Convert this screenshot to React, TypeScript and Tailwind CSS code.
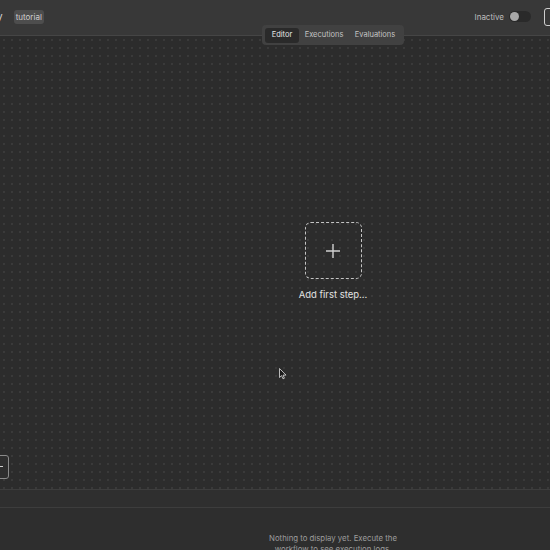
import React from "react";

function Tabs() {
  return (
    <div className="absolute left-[262px] top-[25px] z-10 flex h-[20px] items-center rounded-[4px] bg-[#414141] px-[3px] text-[7.5px] text-[#c4c4c4]">
      <div className="flex h-[15px] w-[34px] items-center justify-center rounded-[3px] bg-[#2a2a2a] text-[#e6e6e6]">Editor</div>
      <div className="flex w-[50px] justify-center">Executions</div>
      <div className="flex w-[52px] justify-center">Evaluations</div>
    </div>
  );
}

export default function App() {
  return (
    <div className="relative flex h-[550px] w-[550px] flex-col overflow-hidden bg-[#2d2d2d] font-['Inter',sans-serif]">
      {/* Header */}
      <header className="flex h-[36px] shrink-0 items-center justify-between border-b border-[#454545] bg-[#383838] pb-[2px]">
        <div className="flex items-center gap-[11px]">
          <span className="-ml-[3px] text-[10px] text-[#d6d6d6]">y</span>
          <span className="rounded-[3px] bg-[#4d4d4d] px-[2px] py-[1px] text-[8px] text-[#cfcfcf]">tutorial</span>
        </div>
        <div className="flex items-center">
          <span className="text-[8px] text-[#bdbdbd]">Inactive</span>
          <div className="ml-[5px] flex h-[11px] w-[22px] items-center rounded-full bg-[#2a2a2a] px-[1px]">
            <div className="h-[9px] w-[9px] rounded-full bg-[#a8a8a8]" />
          </div>
          <div className="ml-[13px] -mr-[30px] flex h-[18px] w-[36px] items-center rounded-[3px] border border-[#cfcfcf] pl-[6px] text-[8px] text-[#e8e8e8]">
            Save
          </div>
        </div>
      </header>

      <Tabs />

      {/* Canvas */}
      <main className="relative flex flex-1 items-center justify-center bg-[#2c2c2c] bg-[radial-gradient(#3b3b3b_0.7px,transparent_0.8px)] bg-[size:8px_8px] pl-[116px]">
        <div className="flex flex-col items-center gap-[9px]">
          <div className="flex h-[57px] w-[57px] items-center justify-center rounded-[6px] border border-dashed border-[#c4c4c4]">
            <svg width="16" height="16" viewBox="0 0 16 16" fill="none" stroke="#d0d0d0" strokeWidth="1.4">
              <path d="M8 1v14M1 8h14" />
            </svg>
          </div>
          <span className="text-[9.5px] text-[#e2e2e2]">Add first step...</span>
        </div>

        {/* canvas control at the left edge */}
        <div className="absolute -left-[16px] top-[419px] h-[24px] w-[25px] rounded-[3px] border border-[#8a8a8a] bg-[#2e2e2e]">
          <div className="absolute right-[5px] top-[10px] h-[1px] w-[3px] bg-[#cfcfcf]" />
        </div>

        {/* mouse pointer */}
        <svg className="absolute left-[279px] top-[332px]" width="8" height="12" viewBox="0 0 8 12">
          <path d="M0.5 0.5 L0.5 9.5 L2.6 7.6 L4 10.8 L5.4 10.2 L4 7.1 L7 7.1 Z" fill="#1a1a1a" stroke="#e0e0e0" strokeWidth="0.8" />
        </svg>
      </main>

      {/* Bottom panel */}
      <div className="h-[19px] shrink-0 border-y border-[#3d3d3d] bg-[#2f2f2f]" />
      <div className="flex h-[42px] shrink-0 justify-center bg-[#2e2e2e] pl-[116px] pt-[25px]">
        <p className="whitespace-nowrap text-center text-[7.8px] leading-[11px] text-[#9c9c9c]">
          Nothing to display yet. Execute the
          <br />
          workflow to see execution logs.
        </p>
      </div>
    </div>
  );
}
